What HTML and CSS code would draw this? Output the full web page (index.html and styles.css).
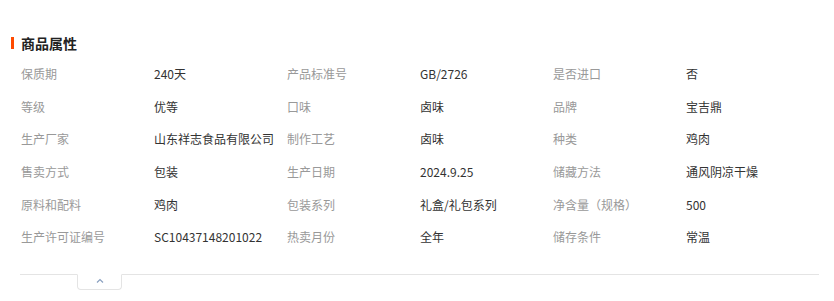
FILE: index.html
```html
<!DOCTYPE html>
<html lang="zh">
<head>
<meta charset="utf-8">
<link rel="stylesheet" href="styles.css">
</head>
<body>
<div class="panel">
  <h2 class="title"><span class="mark"></span>商品属性</h2>
  <div class="grid">
    <div class="k">保质期</div><div class="v">240天</div>
    <div class="k">产品标准号</div><div class="v">GB/2726</div>
    <div class="k">是否进口</div><div class="v">否</div>
    <div class="k">等级</div><div class="v">优等</div>
    <div class="k">口味</div><div class="v">卤味</div>
    <div class="k">品牌</div><div class="v">宝吉鼎</div>
    <div class="k">生产厂家</div><div class="v">山东祥志食品有限公司</div>
    <div class="k">制作工艺</div><div class="v">卤味</div>
    <div class="k">种类</div><div class="v">鸡肉</div>
    <div class="k">售卖方式</div><div class="v">包装</div>
    <div class="k">生产日期</div><div class="v">2024.9.25</div>
    <div class="k">储藏方法</div><div class="v">通风阴凉干燥</div>
    <div class="k">原料和配料</div><div class="v">鸡肉</div>
    <div class="k">包装系列</div><div class="v">礼盒/礼包系列</div>
    <div class="k">净含量（规格）</div><div class="v">500</div>
    <div class="k">生产许可证编号</div><div class="v">SC10437148201022</div>
    <div class="k">热卖月份</div><div class="v">全年</div>
    <div class="k">储存条件</div><div class="v">常温</div>
  </div>
  <div class="footer">
    <div class="tab">
      <svg width="8" height="5" viewBox="0 0 8 5"><path d="M1 4.5 L4 1.5 L7 4.5" fill="none" stroke="#8aa0c0" stroke-width="1.2"/></svg>
    </div>
  </div>
</div>
</body>
</html>
```

FILE: styles.css
```css
html, body {
  margin: 0;
  padding: 0;
  background: #fff;
}
body {
  font-family: "Noto Sans CJK SC", "Noto Sans", sans-serif;
  font-size: 12px;
  color: #333;
}
.panel {
  padding: 33px 15px 0 11px;
  width: 808px;
}
.title {
  display: flex;
  align-items: center;
  margin: 0;
  height: 20px;
  font-size: 14px;
  font-weight: 700;
  color: #222;
  line-height: 20px;
}
.mark {
  display: inline-block;
  width: 3px;
  height: 12px;
  background: #ff4a00;
  margin-right: 7px;
}
.grid {
  display: grid;
  grid-template-columns: repeat(6, 133px);
  grid-auto-rows: 32.6px;
  align-items: center;
  margin: 5px 0 0 10px;
  line-height: 18px;
}
.k {
  color: #999;
}
.v {
  color: #333;
}
.footer {
  margin: 20px 0 0 9px;
  border-top: 1px solid #e4e4e4;
  height: 20px;
}
.tab {
  position: relative;
  left: 57px;
  top: -1px;
  width: 45px;
  height: 16px;
  border: 1px solid #e4e4e4;
  border-top: 1px solid #fff;
  border-radius: 0 0 4px 4px;
  background: #fff;
  display: flex;
  justify-content: center;
  padding-top: 3px;
  box-sizing: border-box;
}
.tab svg {
  display: block;
}
```
